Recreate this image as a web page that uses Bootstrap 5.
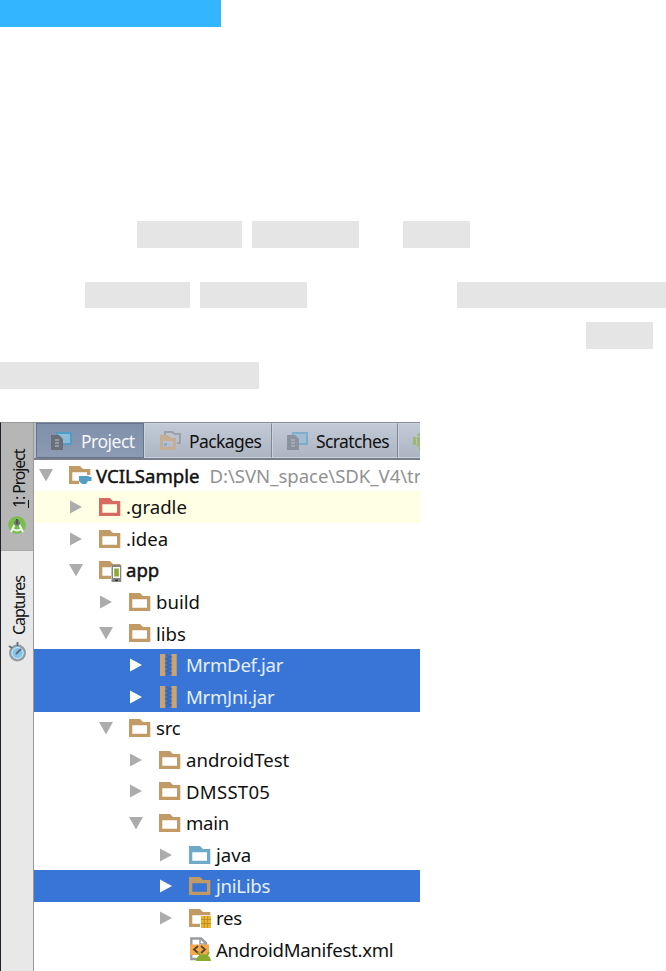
<!DOCTYPE html>
<html lang="en">
<head>
<meta charset="utf-8">
<title>Project libraries</title>
<link href="https://cdn.jsdelivr.net/npm/bootstrap@5.3.0/dist/css/bootstrap.min.css" rel="stylesheet">
<style>
body{background:#fff;width:666px;height:971px;overflow:hidden}
.title-bar{width:221px;height:27px;background:#33b5ff;margin-bottom:194px}
.code-line{height:27px}
.code-line.short{height:26px}
.chip{height:100%;background:#e5e5e5;flex:none}
.w105{width:105px}.w107{width:107px}.w67{width:67px}.w209{width:209px}.w259{width:259px}
.s137{margin-left:137px}.s10{margin-left:10px}.s44{margin-left:44px}.s85{margin-left:85px}.s150{margin-left:150px}.s586{margin-left:586px}
.g34{margin-bottom:34px}.g14{margin-bottom:14px}.g13{margin-bottom:13px}.g33{margin-bottom:33px}
.ide{width:420px;height:549px;font-family:"Noto Sans","Open Sans",sans-serif;font-size:18.6px;color:#111;line-height:1}
.side{width:34px;background:#e8e8e8;border-left:1px solid #20202a;border-right:1px solid #999;border-top:1px solid #999;flex:none}
.side-tab{width:32px;writing-mode:vertical-rl;transform:rotate(180deg);font-size:16px;line-height:28px;white-space:nowrap}
.side-tab.on{height:128px;background:#b6b6b6;border-top:1px solid #aaa;padding-top:15px}
.side-tab.off{height:127px;padding-top:16px}
.side-tab svg{flex:none;transform:rotate(180deg);display:block}
.side-tab .cap{position:relative;left:-2px}
.side-tab.on .cap{margin-top:7px;letter-spacing:-1.15px}
.side-tab.off .cap{margin-top:7px;letter-spacing:-1.1px}
.tabs{height:38px;border-top:1px solid #888e99;border-bottom:2px solid #777f8c;padding-left:2px;background:#b7becb;margin-bottom:-.4px}
.ptab{background:linear-gradient(#c2cad8,#adb5c3);border:1px solid #cbd2de;border-right:1px solid #7f8794;flex:none;white-space:nowrap;font-size:17.5px}
.ptab svg{flex:none}
.ptab.on{width:108px;padding-left:14px;background:linear-gradient(#8090ab,#8c9ab3);border-color:#65748c;color:#f4f6fa}
.ptab.pk{width:128px;padding-left:15px}
.ptab.sc{width:126px;padding-left:14px}
.ptab.an{width:30px;padding-left:14px}
.ptab span{margin-left:7px;padding-top:2px;letter-spacing:-.6px}
.ptab.on span{margin-left:8px;letter-spacing:-.5px}
.line{height:31.6px;padding-left:calc(5px + 30px*var(--lv,0));white-space:nowrap}
.line span{padding-top:1px}
.l1{--lv:1}.l2{--lv:2}.l3{--lv:3}.l4{--lv:4}
.arr{width:30px;height:16px;flex:none;fill:#acacac}
.ico{width:27px;height:22px;flex:none;color:#c19a65;overflow:visible}
.sel{background:#3875d6;color:#e6efff}
.sel .arr{fill:#fff}
.excl{background:#ffffe4}
.red{color:#d76b62}.blue{color:#6fa9c9}
.tight{letter-spacing:-.28px}
.loose{letter-spacing:.25px}
.strong-ish{-webkit-text-stroke:.45px #111}
.line .path{color:#929292;margin-left:10px;letter-spacing:-.05px}
</style>
<script src="https://cdn.jsdelivr.net/npm/bootstrap@5.3.0/dist/js/bootstrap.bundle.min.js"></script>
</head>
<body>
<svg class="d-none">
<symbol id="r" viewBox="0 0 30 16"><path d="M1 1.5 13 8 1 14.5z"/></symbol>
<symbol id="d" viewBox="0 0 30 16"><path d="M0 2H14L7 14.5z"/></symbol>
<symbol id="f" viewBox="0 0 27 22"><path fill="currentColor" fill-rule="evenodd" d="M0 2H11L14 5H21.3V20H0zM3.3 8.3V16.7H18V8.3z"/></symbol>
<symbol id="j" viewBox="0 0 27 22"><path fill="#cda46b" d="M1 0H6.3V22.5H1zM12.5 0H17.7V22.5H12.5z"/><path fill="none" stroke="#43649f" stroke-width="1.2" d="M7 1l5 2-5 2 5 2-5 2 5 2-5 2 5 2-5 2 5 2-5 2"/></symbol>
<symbol id="doc" viewBox="0 0 22 20"><path fill="#8dbcd8" stroke="#519dc5" stroke-width="2" d="M6 2H20V13H6z"/><path fill="#6b7078" d="M0 4H8L12 8V19H0z"/><path fill="none" stroke="#a4abb8" stroke-width="1.3" d="M4 9H8M4 12H8M4 15H8"/></symbol>
</svg>
<main>
<div class="title-bar"></div>
<div class="code-line d-flex g34"><div class="chip w105 s137"></div><div class="chip w107 s10"></div><div class="chip w67 s44"></div></div>
<div class="code-line short d-flex g14"><div class="chip w105 s85"></div><div class="chip w107 s10"></div><div class="chip w209 s150"></div></div>
<div class="code-line d-flex g13"><div class="chip w67 s586"></div></div>
<div class="code-line d-flex g33"><div class="chip w259"></div></div>

<section class="ide d-flex overflow-hidden">
<aside class="side d-flex flex-column">
<div class="side-tab on d-flex align-items-center"><svg width="20" height="20" viewBox="0 0 20 20"><circle cx="10" cy="10" r="8.8" fill="#79bd4f"/><path d="M4 17 8 9M16 17 12 9M6 14Q10 17 14 14" fill="none" stroke="#f1f5ed" stroke-width="2"/><circle cx="10" cy="8" r="3" fill="#6d7b68"/><path d="M10 4V9" stroke="#555" stroke-width="2"/></svg><span class="cap"><u>1</u>: Project</span></div>
<div class="side-tab off d-flex align-items-center"><svg width="20" height="20" viewBox="0 0 20 20"><circle cx="10.5" cy="11" r="7.5" fill="#84c3e8" stroke="#949a9e" stroke-width="2"/><circle cx="10.5" cy="11" r="5.5" fill="none" stroke="#d5e8f1"/><path d="M10.5 4V0M2 4 5 6M9 12 14 7" stroke="#5e6d76" stroke-width="1.8"/></svg><span class="cap">Captures</span></div>
</aside>
<div class="flex-grow-1 overflow-hidden">
<div class="tabs d-flex">
<div class="ptab on d-flex align-items-center"><svg width="22" height="20"><use href="#doc"/></svg><span>Project</span></div>
<div class="ptab pk d-flex align-items-center"><svg width="22" height="20" viewBox="0 0 22 20"><path d="M5 4V1H12L15 3H20V12H17" fill="none" stroke="#9ba1aa" stroke-width="2"/><path fill="#c7ae93" fill-rule="evenodd" d="M0 4H8L11 7H16V19H0zM3 10V16H13V10z"/><path d="M4 12H7V15H4z" fill="#7eb1d3"/></svg><span>Packages</span></div>
<div class="ptab sc d-flex align-items-center"><svg width="22" height="20" opacity=".55"><use href="#doc"/></svg><span>Scratches</span></div>
<div class="ptab an d-flex align-items-center"><svg width="20" height="20" viewBox="0 0 20 20"><path fill="#9dbb70" d="M0 6H3V14H0zM4 6H16V16H4zM4 5Q5 1 10 1T16 5zM6 16H9V20H6z"/></svg></div>
</div>
<div class="line d-flex align-items-center"><svg class="arr"><use href="#d"/></svg><svg class="ico" viewBox="0 0 27 22"><path fill="currentColor" d="M0 2H11L14 5H21.3V11H18V8.3H3.3V16.7H10V20H0z"/><path fill="#519fc9" d="M10 12H20V13H22.5V17H19L17 20H13L10 17z"/></svg><span class="strong-ish">VCILSample</span><span class="path">D:\SVN_space\SDK_V4\tr</span></div>
<div class="line l1 excl d-flex align-items-center"><svg class="arr"><use href="#r"/></svg><svg class="ico red"><use href="#f"/></svg><span>.gradle</span></div>
<div class="line l1 d-flex align-items-center"><svg class="arr"><use href="#r"/></svg><svg class="ico"><use href="#f"/></svg><span>.idea</span></div>
<div class="line l1 d-flex align-items-center"><svg class="arr"><use href="#d"/></svg><svg class="ico" viewBox="0 0 27 22"><path fill="currentColor" d="M0 2H11L14 5H21.3V7H12V8.3H3.3V16.7H12V20H0z"/><path fill="#858585" d="M12.5 6H22.3V23H12.5z"/><path fill="#fff" d="M14 8H21V19H14z"/><path fill="#8aab2c" d="M15.2 9.5H19.8V17.5H15.2z"/><path fill="#333" d="M16 20.5H19V22H16z"/></svg><span class="strong-ish">app</span></div>
<div class="line l2 d-flex align-items-center"><svg class="arr"><use href="#r"/></svg><svg class="ico"><use href="#f"/></svg><span>build</span></div>
<div class="line l2 d-flex align-items-center"><svg class="arr"><use href="#d"/></svg><svg class="ico"><use href="#f"/></svg><span>libs</span></div>
<div class="line l3 sel d-flex align-items-center"><svg class="arr"><use href="#r"/></svg><svg class="ico"><use href="#j"/></svg><span class="tight">MrmDef.jar</span></div>
<div class="line l3 sel d-flex align-items-center"><svg class="arr"><use href="#r"/></svg><svg class="ico"><use href="#j"/></svg><span class="tight">MrmJni.jar</span></div>
<div class="line l2 d-flex align-items-center"><svg class="arr"><use href="#d"/></svg><svg class="ico"><use href="#f"/></svg><span class="tight">src</span></div>
<div class="line l3 d-flex align-items-center"><svg class="arr"><use href="#r"/></svg><svg class="ico"><use href="#f"/></svg><span>androidTest</span></div>
<div class="line l3 d-flex align-items-center"><svg class="arr"><use href="#r"/></svg><svg class="ico"><use href="#f"/></svg><span class="loose">DMSST05</span></div>
<div class="line l3 d-flex align-items-center"><svg class="arr"><use href="#d"/></svg><svg class="ico"><use href="#f"/></svg><span class="tight">main</span></div>
<div class="line l4 d-flex align-items-center"><svg class="arr"><use href="#r"/></svg><svg class="ico blue"><use href="#f"/></svg><span>java</span></div>
<div class="line l4 sel d-flex align-items-center"><svg class="arr"><use href="#r"/></svg><svg class="ico"><use href="#f"/></svg><span class="tight">jniLibs</span></div>
<div class="line l4 d-flex align-items-center"><svg class="arr"><use href="#r"/></svg><svg class="ico" viewBox="0 0 27 22"><path fill="currentColor" d="M0 2H11L14 5H21.3V8.3H3.3V16.7H11V20H0z"/><path fill="#efb52c" d="M12 9H22V21H12z"/><path stroke="#b98a22" stroke-width=".9" d="M12 12.5H22M12 16.5H22M15.3 9V21M18.7 9V21"/></svg><span class="tight">res</span></div>
<div class="line l4 d-flex align-items-center"><svg class="arr"></svg><svg class="ico" viewBox="0 0 27 22"><path fill="#fff" stroke="#9a9da0" stroke-width="2.4" d="M2.3 0.5H12L17 5V21H2.3z"/><path fill="none" stroke="#9a9da0" stroke-width="1.5" d="M11 0V6H18"/><path fill="#f4a850" d="M1 6.5H20V17H1z"/><path fill="none" stroke="#5a4429" stroke-width="1.8" d="M9 8 5 11.5 9 15M12 8 16 11.5 12 15"/><path fill="#89aa2b" d="M7 23Q7.5 18.5 11 17Q14.500 15.500 18 17Q21.500 18.500 22 23z"/><path fill="none" stroke="#89aa2b" stroke-width="1.8" d="M9 14 11.500 18M20 14 17.500 18"/></svg><span class="tight">AndroidManifest.xml</span></div>
</div>
</section>
</main>
</body>
</html>
